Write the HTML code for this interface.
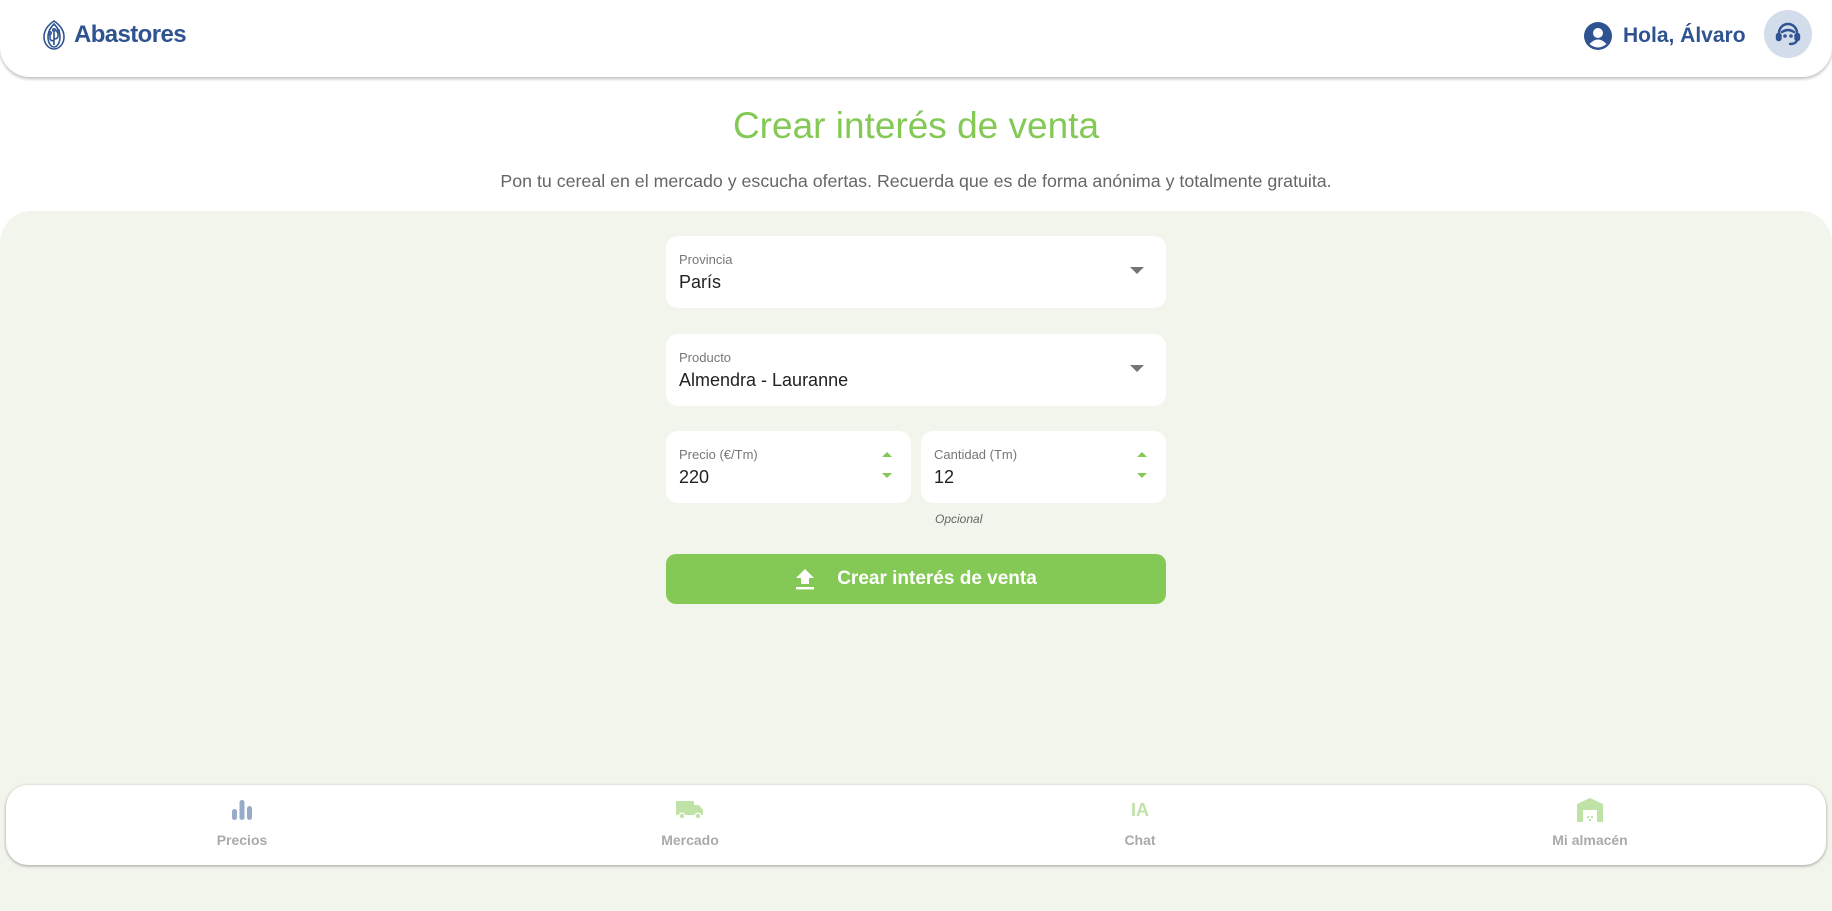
<!DOCTYPE html>
<html><head><meta charset="utf-8"><style>
*{box-sizing:border-box;margin:0;padding:0}
body{width:1832px;height:873px;overflow:hidden;background:#fff;font-family:"Liberation Sans","DejaVu Sans",sans-serif;position:relative}
.hdr{position:absolute;left:0;top:0;width:1832px;height:77px;background:#fff;border-radius:0 0 30px 30px;box-shadow:0 2px 3px rgba(0,0,0,.25);z-index:3}
.logo{position:absolute;left:40px;top:19px;display:flex;align-items:center}
.logo span{font-weight:bold;font-size:24px;color:#2f5391;letter-spacing:-.6px;margin-left:6px}
.hola{position:absolute;left:1584px;top:22px;display:flex;align-items:center;color:#2f5391;font-weight:bold;font-size:21px}
.hola svg{margin-right:11px}
.sup{position:absolute;left:1764px;top:10px;width:48px;height:48px;border-radius:50%;background:#d3dcea;display:flex;align-items:center;justify-content:center}
h1{position:absolute;top:105px;width:100%;text-align:center;color:#84c955;font-weight:normal;font-size:37px}
.sub{position:absolute;top:171px;width:100%;text-align:center;color:#666;font-size:17.8px}
.main{position:absolute;left:0;top:211px;width:1832px;height:700px;background:#f2f5ec;border-radius:32px 32px 0 0}
.box{position:absolute;background:#fff;border-radius:12px}
.lab{position:absolute;left:13px;top:16px;font-size:13px;color:#777}
.val{position:absolute;left:13px;top:36px;font-size:18px;color:#222}
.dd{position:absolute;right:22px;top:31px;width:0;height:0;border-left:7px solid transparent;border-right:7px solid transparent;border-top:7px solid #757575}
.up,.dn{position:absolute;right:19px;width:0;height:0;border-left:5px solid transparent;border-right:5px solid transparent}
.up{top:21px;border-bottom:5px solid #84c955}
.dn{top:42px;border-top:5px solid #84c955}
.btn{position:absolute;left:666px;top:554px;width:500px;height:50px;background:#84c955;border-radius:10px;color:#fff;font-weight:bold;font-size:19px;display:flex;align-items:center;justify-content:center}
.nav{position:absolute;left:6px;top:785px;width:1820px;height:80px;background:#fff;border-radius:22px;box-shadow:0 1px 3px rgba(0,0,0,.35)}
.it{position:absolute;top:12px;width:200px;margin-left:-100px;text-align:center;color:#aaa;font-weight:bold;font-size:14px}
.it .ic{height:26px;display:flex;align-items:center;justify-content:center;margin-bottom:9px}
</style></head><body>
<div class="hdr">
 <div class="logo"><svg width="28" height="32" viewBox="0 0 28 32" fill="none" stroke="#2f5391" stroke-width="1.6"><path d="M14 2 C8 6 4 11 4 18 C4 25 9 30 14 30 C19 30 24 25 24 18 C24 11 20 6 14 2Z"/><path d="M14 5 C10 9 8 13 8 18 C8 24 11 28 14 28 C17 28 20 24 20 18 C20 13 18 9 14 5Z"/><path d="M14 12 V26 M10 15 V19 Q10 22 14 22 M18 13 V17 Q18 20 14 20"/><circle cx="14" cy="11" r="1.2"/><circle cx="10" cy="14" r="1.2"/><circle cx="18" cy="12" r="1.2"/></svg><span>Abastores</span></div>
 <div class="hola"><svg width="28" height="28" viewBox="0 0 28 28"><circle cx="14" cy="14" r="14" fill="#2f5391"/><circle cx="14" cy="11" r="5" fill="#fff"/><path d="M5.5 22 Q14 13 22.5 22 Q14 29 5.5 22Z" fill="#fff"/></svg>Hola, Álvaro</div>
 <div class="sup"><svg width="30" height="30" viewBox="0 0 30 30" fill="none" stroke="#2f5391" stroke-width="2.4" stroke-linecap="round"><path d="M6 17 V14 A9 9 0 0 1 24 14 V17"/><path d="M9 13 Q15 9 21 13"/><rect x="4" y="15" width="3.5" height="6" rx="1.5" fill="#2f5391"/><rect x="22.5" y="15" width="3.5" height="6" rx="1.5" fill="#2f5391"/><path d="M24 21 Q23 25 17 25"/><circle cx="12" cy="17" r=".6" fill="#2f5391"/><circle cx="18" cy="17" r=".6" fill="#2f5391"/></svg></div>
</div>
<h1>Crear interés de venta</h1>
<div class="sub">Pon tu cereal en el mercado y escucha ofertas. Recuerda que es de forma anónima y totalmente gratuita.</div>
<div class="main"></div>
<div class="box" style="left:666px;top:236px;width:500px;height:72px"><div class="lab">Provincia</div><div class="val">París</div><div class="dd"></div></div>
<div class="box" style="left:666px;top:334px;width:500px;height:72px"><div class="lab">Producto</div><div class="val">Almendra - Lauranne</div><div class="dd"></div></div>
<div class="box" style="left:666px;top:431px;width:245px;height:72px"><div class="lab">Precio (€/Tm)</div><div class="val">220</div><div class="up"></div><div class="dn"></div></div>
<div class="box" style="left:921px;top:431px;width:245px;height:72px"><div class="lab">Cantidad (Tm)</div><div class="val">12</div><div class="up"></div><div class="dn"></div></div>
<div style="position:absolute;left:935px;top:512px;font-size:12px;font-style:italic;color:#666">Opcional</div>
<div class="btn"><svg width="20" height="22" viewBox="0 0 20 22" style="margin-right:22px"><path d="M10 1 L19 10 H14 V16 H6 V10 H1Z" fill="#fff"/><rect x="1" y="19" width="18" height="2.4" fill="#fff"/></svg>Crear interés de venta</div>
<div class="nav">
 <div class="it" style="left:236px"><div class="ic"><svg width="22" height="22" viewBox="0 0 22 22" fill="#99abca"><rect x="1" y="10" width="5" height="11" rx="2.5"/><rect x="8.5" y="1" width="5" height="20" rx="2.5"/><rect x="16" y="7" width="5" height="14" rx="2.5"/></svg></div>Precios</div>
 <div class="it" style="left:684px"><div class="ic"><svg width="28" height="22" viewBox="0 0 28 22" fill="#bfe3a6"><rect x="0" y="2" width="18" height="14" rx="1"/><path d="M18 6 H23 L27 11 V16 H18Z"/><circle cx="6" cy="17" r="3.5" fill="#fff"/><circle cx="6" cy="17" r="2.2"/><circle cx="22" cy="17" r="3.5" fill="#fff"/><circle cx="22" cy="17" r="2.2"/></svg></div>Mercado</div>
 <div class="it" style="left:1134px"><div class="ic" style="color:#bfe3a6;font-size:18px">IA</div>Chat</div>
 <div class="it" style="left:1584px"><div class="ic"><svg width="26" height="24" viewBox="0 0 26 24" fill="#bfe3a6"><path d="M0 6 L13 0 L26 6 V24 H20 V12 H6 V24 H0Z"/><rect x="10" y="18" width="2" height="2"/><rect x="14" y="18" width="2" height="2"/><rect x="12" y="21" width="2" height="2"/></svg></div>Mi almacén</div>
</div>
</body></html>
